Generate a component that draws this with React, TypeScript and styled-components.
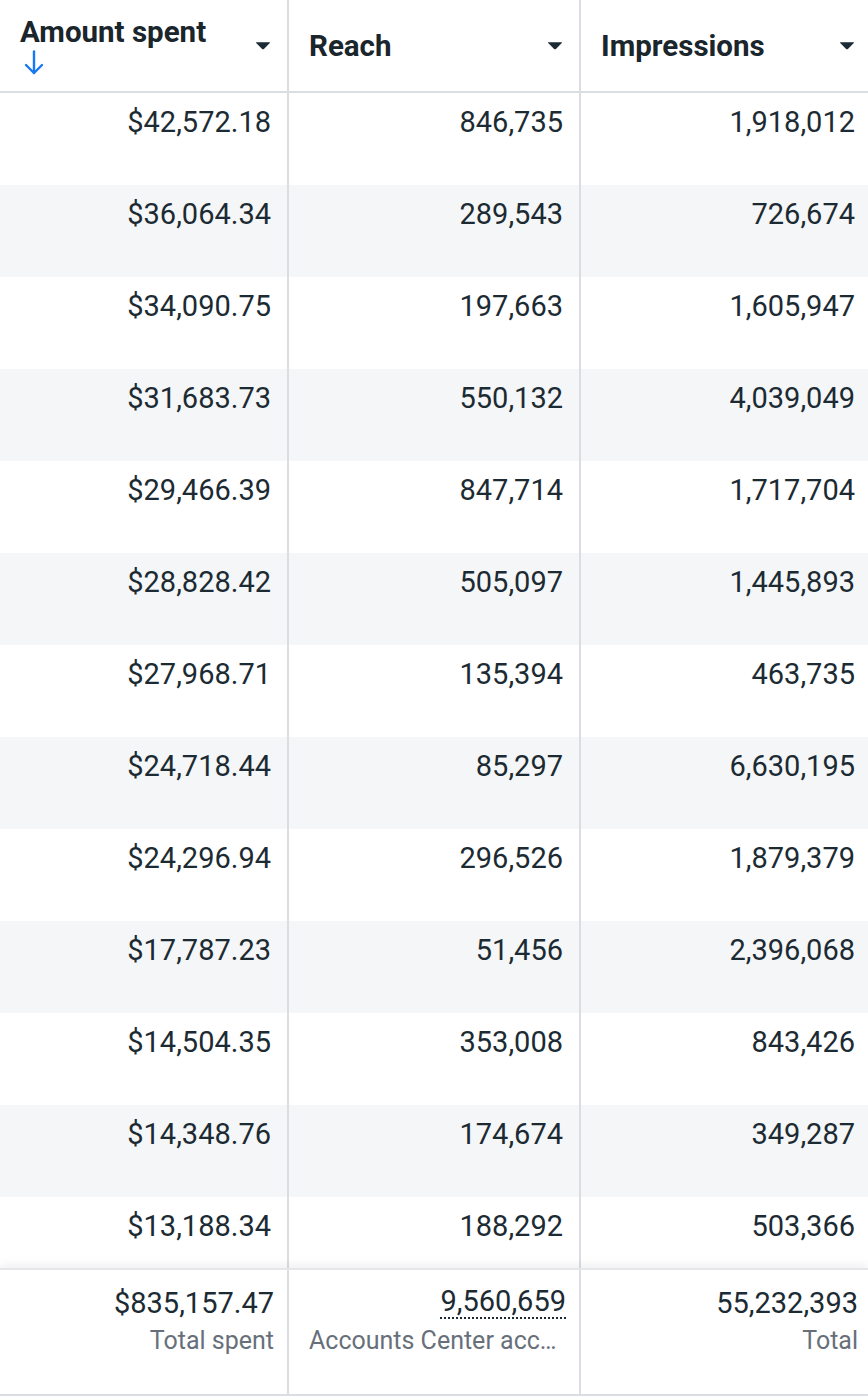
import React from "react";
import styled, { createGlobalStyle } from "styled-components";

const GlobalStyle = createGlobalStyle`
  html, body {
    margin: 0;
    padding: 0;
    background: #ffffff;
  }
  body {
    font-family: Roboto, "Liberation Sans", Arial, sans-serif;
    color: #1c2b33;
    overflow: hidden;
  }
`;

const COLS = "289px 292px 292px";

const Table = styled.div`
  width: 868px;
  height: 1398px;
  overflow: hidden;
  position: relative;
`;

const Header = styled.div`
  display: grid;
  grid-template-columns: ${COLS};
  height: 93px;
  box-sizing: border-box;
  border-bottom: 2px solid #dadde1;
`;

const HeaderCell = styled.div<{ $last?: boolean }>`
  display: flex;
  align-items: center;
  justify-content: space-between;
  padding: 0 ${(p) => (p.$last ? "18px" : "16px")} 0 20px;
  border-right: ${(p) => (p.$last ? "none" : "2px solid #dadde1")};
`;

const HeaderTitle = styled.div`
  display: flex;
  flex-direction: column;
  font-size: 29.5px;
  font-weight: 700;
  line-height: 32px;
  color: #1a252c;
`;

const SortArrow = styled.span`
  display: flex;
  margin: 2px 0 0 4px;
  color: #1877f2;

  svg {
    flex-shrink: 0;
  }
`;

const Caret = styled.span`
  display: flex;
  align-items: center;
`;

const Body = styled.div`
  height: 1175px;
  overflow: hidden;
`;

const Row = styled.div<{ $shaded: boolean }>`
  display: grid;
  grid-template-columns: ${COLS};
  height: 92px;
  background: ${(p) => (p.$shaded ? "#f5f6f7" : "#ffffff")};
`;

const Cell = styled.div<{ $last?: boolean }>`
  box-sizing: border-box;
  padding: 13px ${(p) => (p.$last ? "18px" : "16px")} 0 0;
  text-align: right;
  font-size: 29px;
  line-height: 32px;
  border-right: ${(p) => (p.$last ? "none" : "2px solid #dadde1")};
`;

const Footer = styled.div`
  display: grid;
  grid-template-columns: ${COLS};
  height: 128px;
  box-sizing: border-box;
  border-top: 2px solid #e4e6e9;
  border-bottom: 2px solid #dadde1;
  box-shadow: 0 -5px 8px rgba(0, 0, 0, 0.05);
  position: relative;
  background: #ffffff;
`;

const FooterCell = styled.div<{ $last?: boolean }>`
  display: flex;
  flex-direction: column;
  align-items: flex-end;
  min-width: 0;
  padding: 16px ${(p) => (p.$last ? "15px" : "13px")} 0 20px;
  border-right: ${(p) => (p.$last ? "none" : "2px solid #dadde1")};
`;

const Total = styled.span<{ $dotted?: boolean }>`
  font-size: 29px;
  border-bottom: ${(p) => (p.$dotted ? "2px dotted #1c2b33" : "none")};
  line-height: ${(p) => (p.$dotted ? "31px" : "34px")};
  margin-bottom: ${(p) => (p.$dotted ? "6px" : "5px")};
`;

const TotalLabel = styled.span`
  max-width: 100%;
  font-size: 25px;
  line-height: 32px;
  color: #67707a;
  white-space: nowrap;
  overflow: hidden;
  text-overflow: ellipsis;
`;

const rows: [string, string, string][] = [
  ["$42,572.18", "846,735", "1,918,012"],
  ["$36,064.34", "289,543", "726,674"],
  ["$34,090.75", "197,663", "1,605,947"],
  ["$31,683.73", "550,132", "4,039,049"],
  ["$29,466.39", "847,714", "1,717,704"],
  ["$28,828.42", "505,097", "1,445,893"],
  ["$27,968.71", "135,394", "463,735"],
  ["$24,718.44", "85,297", "6,630,195"],
  ["$24,296.94", "296,526", "1,879,379"],
  ["$17,787.23", "51,456", "2,396,068"],
  ["$14,504.35", "353,008", "843,426"],
  ["$14,348.76", "174,674", "349,287"],
  ["$13,188.34", "188,292", "503,366"],
];

const CaretIcon = () => (
  <Caret>
    <svg width="16" height="9" viewBox="0 0 16 9">
      <path d="M1.5 1.2 H14.5 Q15.6 1.2 14.8 2.1 L8.9 7.9 Q8 8.7 7.1 7.9 L1.2 2.1 Q0.4 1.2 1.5 1.2 Z" fill="#1c2b33" />
    </svg>
  </Caret>
);

const ArrowDownIcon = () => (
  <svg width="20" height="25" viewBox="0 0 20 25" fill="none" stroke="currentColor" strokeWidth="2.4" strokeLinecap="round" strokeLinejoin="round">
    <path d="M10 1.5 V23" />
    <path d="M2 15 L10 23 L18 15" />
  </svg>
);

export default function App() {
  return (
    <>
      <GlobalStyle />
      <Table>
        <Header>
          <HeaderCell>
            <HeaderTitle>
              Amount spent
              <SortArrow>
                <ArrowDownIcon />
              </SortArrow>
            </HeaderTitle>
            <CaretIcon />
          </HeaderCell>
          <HeaderCell>
            <HeaderTitle>Reach</HeaderTitle>
            <CaretIcon />
          </HeaderCell>
          <HeaderCell $last>
            <HeaderTitle>Impressions</HeaderTitle>
            <CaretIcon />
          </HeaderCell>
        </Header>
        <Body>
          {rows.map((r, i) => (
            <Row key={r[0]} $shaded={i % 2 === 1}>
              <Cell>{r[0]}</Cell>
              <Cell>{r[1]}</Cell>
              <Cell $last>{r[2]}</Cell>
            </Row>
          ))}
        </Body>
        <Footer>
          <FooterCell>
            <Total>$835,157.47</Total>
            <TotalLabel>Total spent</TotalLabel>
          </FooterCell>
          <FooterCell>
            <Total $dotted>9,560,659</Total>
            <TotalLabel>Accounts Center accounts reached</TotalLabel>
          </FooterCell>
          <FooterCell $last>
            <Total>55,232,393</Total>
            <TotalLabel>Total</TotalLabel>
          </FooterCell>
        </Footer>
      </Table>
    </>
  );
}
